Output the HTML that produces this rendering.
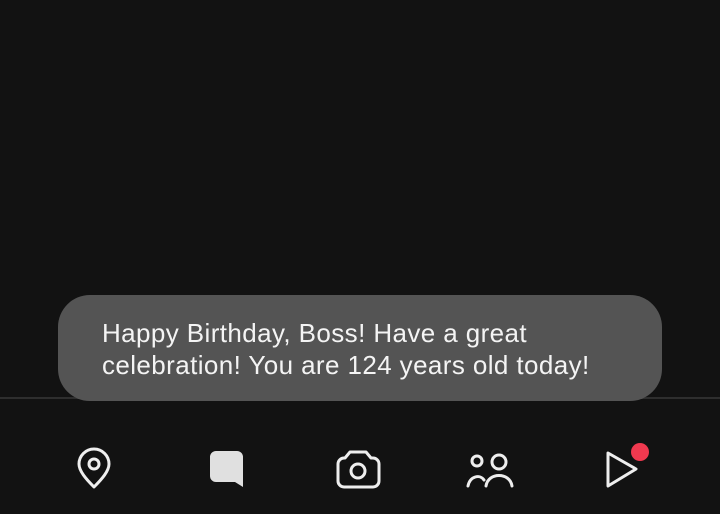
<!DOCTYPE html>
<html><head><style>
html,body{margin:0;padding:0;background:#121212;width:720px;height:514px;overflow:hidden;position:relative}
.line{position:absolute;left:0;top:397px;width:720px;height:2px;background:#2e2e2e}
.bubble{position:absolute;left:58px;top:295px;width:604px;height:106px;border-radius:32px;background:#545454}
.txt{position:absolute;left:102px;top:317px;font-family:"Liberation Sans",sans-serif;font-size:26px;line-height:32px;color:#f4f4f4;letter-spacing:0.4px;white-space:nowrap}
svg{position:absolute}
</style></head><body>
<div class="line"></div>
<div class="bubble"></div>
<div class="txt">Happy Birthday, Boss! Have a great<br>celebration! You are 124 years old today!</div>
<svg width="720" height="514" style="left:0;top:0">
<g fill="none" stroke="#eee" stroke-width="3" stroke-linejoin="round" stroke-linecap="round">
<path d="M94 487 C86 479 79 471 79 464 A15 15 0 0 1 109 464 C109 471 102 479 94 487 Z"/>
<circle cx="94" cy="464" r="5"/>
<path d="M345 458 L350 452 H366 L371 458 H373 A6 6 0 0 1 379 464 V481 A6 6 0 0 1 373 487 H344 A6 6 0 0 1 338 481 V464 A6 6 0 0 1 344 458 Z"/>
<circle cx="358" cy="471" r="7"/>
<circle cx="477" cy="461" r="5"/>
<circle cx="499" cy="462" r="7"/>
<path d="M468 486 C470 476 480 474 484 480"/>
<path d="M486 486 C488 472 510 472 512 486"/>
<path d="M608 453 L636 469 L608 486 Z"/>
</g>
<path d="M216 451 H237 A6 6 0 0 1 243 457 V487 L235 482 H216 A6 6 0 0 1 210 476 V457 A6 6 0 0 1 216 451 Z" fill="#e0e0e0"/>
<circle cx="640" cy="452" r="9" fill="#f0394f"/>
</svg>
</body></html>
